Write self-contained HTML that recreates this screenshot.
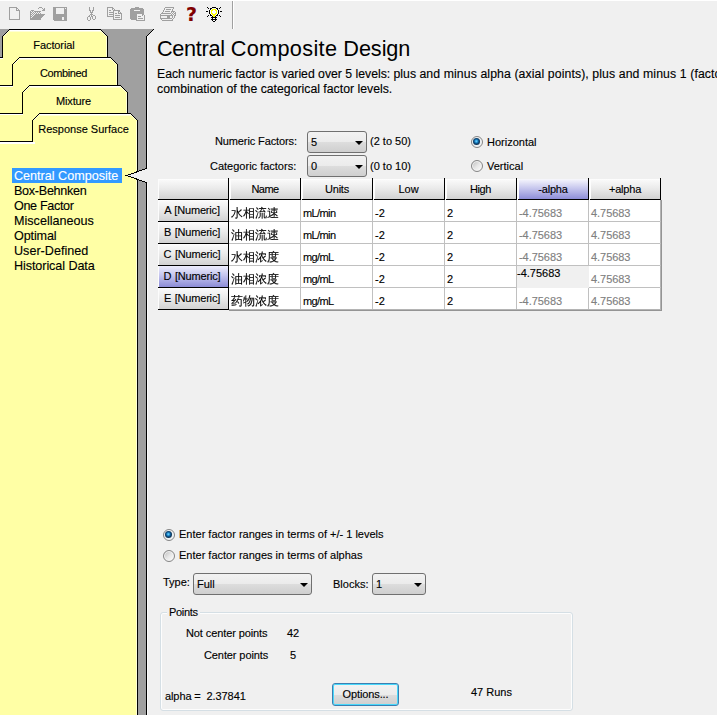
<!DOCTYPE html>
<html>
<head>
<meta charset="utf-8">
<title>Central Composite Design</title>
<style>
html,body{margin:0;padding:0;background:#f0f0f0;}
body{width:717px;height:715px;overflow:hidden;background:#f0f0f0;position:relative;
 font-family:"Liberation Sans","Noto Sans CJK SC",sans-serif;font-size:11px;color:#000;-webkit-text-stroke:0.13px;}
.abs{position:absolute;white-space:pre;line-height:1;}
#left{position:absolute;left:0;top:0;}
.tab{position:absolute;width:105px;text-align:center;font-size:11px;line-height:13px;white-space:pre;}
.li{position:absolute;left:12px;width:110px;height:15px;line-height:17px;font-size:12.6px;padding-left:2px;box-sizing:border-box;white-space:pre;}
.li.sel{background:#3399ff;color:#fff;}
.h1{position:absolute;left:157px;top:37px;font-size:21.68px;-webkit-text-stroke:0;line-height:24px;white-space:pre;}
.desc{position:absolute;left:157px;font-size:12.27px;line-height:14px;white-space:pre;}
/* table */
.k{position:absolute;background:#000;}
.gl{position:absolute;background:#c0c0c0;}
.hd{position:absolute;top:179px;height:20px;width:71px;box-sizing:border-box;text-align:center;line-height:20px;font-size:11px;
 background:linear-gradient(#ffffff 0,#f9f9f9 6%,#ebebeb 45%,#d2d2d2 100%);white-space:pre;border-left:2px solid #fdfdfd;padding-right:2px;}
.hd.sel{background:linear-gradient(#f8f8fb 0,#eeeefa 8%,#c8c8ee 45%,#8e8ed8);}
.rh{position:absolute;left:158px;width:70px;height:21px;box-sizing:border-box;text-align:center;line-height:20px;font-size:11px;letter-spacing:-0.18px;word-spacing:0.7px;border-left:1px solid #fcfcfc;padding-right:3px;
 background:linear-gradient(#ffffff 0,#f9f9f9 6%,#ebebeb 45%,#d2d2d2 100%);white-space:pre;}
.rh.sel{background:linear-gradient(#ececfb,#c4c4ee 45%,#8c8cd6);}
.cell{position:absolute;height:21px;width:71px;background:#fff;box-sizing:border-box;font-size:11px;line-height:26px;padding-left:2px;white-space:pre;}
.cell.cn{font-family:"Liberation Sans","WenQuanYi Zen Hei",sans-serif;font-size:12px;padding-left:2px;line-height:27px;}
.cell.g{color:#808080;padding-left:2px;letter-spacing:-0.05px;}
.cell.ed{background:#f0f0f0;padding-left:0;line-height:14px;height:22px;width:72px;}
.cell.un{letter-spacing:-0.6px;}
.lbl{position:absolute;font-size:11px;line-height:13px;white-space:pre;}
.sel-box{position:absolute;height:22px;box-sizing:border-box;border:1px solid #707070;border-radius:3px;
 background:linear-gradient(#f2f2f2,#ebebeb 50%,#dddddd 50%,#cfcfcf);font-size:11px;line-height:20px;padding-left:3px;white-space:pre;}
.sel-box:after{content:"";position:absolute;right:3px;top:9px;border:4px solid transparent;border-top:4px solid #000;border-bottom:0;}
.radio{position:absolute;width:12px;height:12px;border-radius:50%;box-sizing:border-box;border:1px solid #858585;
 background:linear-gradient(135deg,#c4c4c4 10%,#e6e6e6 50%,#fbfbfb 90%);box-shadow:inset 0 0 0 1px #f3f3f3;}
.radio.on{background:#e9eef2;}
.radio.on:after{content:"";position:absolute;left:1px;top:1px;width:7px;height:7px;border-radius:50%;
 background:radial-gradient(circle at 48% 46%,#7fd8fa 0,#2b9ee0 22%,#0f5890 42%,#0f3456 64%,#243e58 80%,rgba(110,125,140,.45) 100%);}
.fs{position:absolute;left:160px;top:612px;width:413px;height:99px;box-sizing:border-box;border:1px solid #d5dfe5;border-radius:3px;box-shadow:inset 0 0 0 1px rgba(255,255,255,.85);}
.btn{position:absolute;left:332px;top:683px;width:67px;height:23px;box-sizing:border-box;border:1px solid #3c7fb1;border-radius:3px;
 background:linear-gradient(#f2f2f2,#ebebeb 50%,#dddddd 50%,#cfcfcf);box-shadow:inset 0 0 0 1px #48d8fb;text-align:center;font-size:11px;line-height:21px;white-space:pre;letter-spacing:-0.1px;}
</style>
</head>
<body>
<!-- left panel shapes -->
<div style="position:absolute;left:0;top:0;width:717px;height:1px;background:#fff;"></div>
<svg id="tb" width="240" height="29" viewBox="0 0 240 29" shape-rendering="crispEdges" style="position:absolute;left:0;top:0">
<path fill="#a0a0a0" d="M9 7h8v1h-8zM9 8h1v1h-1zM16 8h2v1h-2zM9 9h1v1h-1zM16 9h1v1h-1zM18 9h1v1h-1zM9 10h1v1h-1zM16 10h4v1h-4zM9 11h1v1h-1zM19 11h1v1h-1zM9 12h1v1h-1zM19 12h1v1h-1zM9 13h1v1h-1zM19 13h1v1h-1zM9 14h1v1h-1zM19 14h1v1h-1zM9 15h1v1h-1zM19 15h1v1h-1zM9 16h1v1h-1zM19 16h1v1h-1zM9 17h1v1h-1zM19 17h1v1h-1zM9 18h1v1h-1zM19 18h1v1h-1zM9 19h11v1h-11z"/>
<path fill="#a0a0a0" d="M39 7h3v1h-3zM38 8h1v1h-1zM42 8h1v1h-1zM44 8h1v1h-1zM43 9h2v1h-2zM31 10h3v1h-3zM42 10h3v1h-3zM30 11h1v1h-1zM32 11h1v1h-1zM34 11h7v1h-7zM30 12h2v1h-2zM33 12h1v1h-1zM35 12h1v1h-1zM37 12h1v1h-1zM39 12h1v1h-1zM30 13h1v1h-1zM32 13h1v1h-1zM34 13h1v1h-1zM36 13h1v1h-1zM38 13h1v1h-1zM40 13h1v1h-1zM30 14h2v1h-2zM33 14h1v1h-1zM35 14h10v1h-10zM30 15h1v1h-1zM32 15h1v1h-1zM34 15h10v1h-10zM30 16h2v1h-2zM33 16h10v1h-10zM30 17h1v1h-1zM32 17h10v1h-10zM30 18h11v1h-11zM30 19h11v1h-11z"/>
<path fill="#a0a0a0" d="M53 7h14v1h-14zM53 8h3v1h-3zM64 8h1v1h-1zM66 8h1v1h-1zM53 9h3v1h-3zM64 9h3v1h-3zM53 10h3v1h-3zM64 10h3v1h-3zM53 11h3v1h-3zM64 11h3v1h-3zM53 12h3v1h-3zM64 12h3v1h-3zM53 13h3v1h-3zM64 13h3v1h-3zM53 14h14v1h-14zM53 15h14v1h-14zM53 16h14v1h-14zM53 17h9v1h-9zM64 17h3v1h-3zM53 18h9v1h-9zM64 18h3v1h-3zM53 19h9v1h-9zM64 19h3v1h-3zM54 20h13v1h-13z"/>
<path fill="#a0a0a0" d="M89 7h1v1h-1zM93 7h1v1h-1zM89 8h1v1h-1zM93 8h1v1h-1zM89 9h1v1h-1zM93 9h1v1h-1zM89 10h2v1h-2zM92 10h2v1h-2zM90 11h1v1h-1zM92 11h1v1h-1zM90 12h3v1h-3zM91 13h1v1h-1zM90 14h3v1h-3zM89 15h1v1h-1zM91 15h1v1h-1zM93 15h2v1h-2zM88 16h2v1h-2zM91 16h2v1h-2zM95 16h1v1h-1zM87 17h1v1h-1zM90 17h1v1h-1zM92 17h1v1h-1zM95 17h1v1h-1zM87 18h1v1h-1zM90 18h1v1h-1zM92 18h1v1h-1zM95 18h1v1h-1zM87 19h1v1h-1zM90 19h1v1h-1zM93 19h2v1h-2zM88 20h2v1h-2z"/>
<path fill="#a0a0a0" d="M107 7h6v1h-6zM107 8h1v1h-1zM112 8h2v1h-2zM107 9h1v1h-1zM112 9h1v1h-1zM114 9h1v1h-1zM107 10h1v1h-1zM109 10h2v1h-2zM113 10h7v1h-7zM107 11h1v1h-1zM113 11h1v1h-1zM118 11h2v1h-2zM107 12h1v1h-1zM109 12h5v1h-5zM118 12h1v1h-1zM120 12h1v1h-1zM107 13h1v1h-1zM113 13h1v1h-1zM115 13h2v1h-2zM118 13h4v1h-4zM107 14h1v1h-1zM109 14h5v1h-5zM121 14h1v1h-1zM107 15h1v1h-1zM113 15h1v1h-1zM115 15h5v1h-5zM121 15h1v1h-1zM107 16h7v1h-7zM121 16h1v1h-1zM113 17h1v1h-1zM115 17h5v1h-5zM121 17h1v1h-1zM113 18h1v1h-1zM121 18h1v1h-1zM113 19h9v1h-9z"/>
<path fill="#a0a0a0" d="M135 7h4v1h-4zM131 8h12v1h-12zM130 9h14v1h-14zM130 10h4v1h-4zM140 10h4v1h-4zM130 11h14v1h-14zM130 12h14v1h-14zM130 13h14v1h-14zM130 14h7v1h-7zM142 14h2v1h-2zM130 15h7v1h-7zM142 15h1v1h-1zM144 15h1v1h-1zM130 16h7v1h-7zM138 16h3v1h-3zM144 16h1v1h-1zM130 17h7v1h-7zM144 17h1v1h-1zM130 18h7v1h-7zM138 18h5v1h-5zM144 18h1v1h-1zM131 19h6v1h-6zM144 19h1v1h-1zM136 20h9v1h-9z"/>
<path fill="#a0a0a0" d="M165 7h9v1h-9zM164 8h1v1h-1zM173 8h1v1h-1zM164 9h1v1h-1zM166 9h5v1h-5zM172 9h1v1h-1zM163 10h1v1h-1zM172 10h1v1h-1zM163 11h1v1h-1zM165 11h5v1h-5zM171 11h4v1h-4zM162 12h1v1h-1zM171 12h1v1h-1zM173 12h1v1h-1zM175 12h1v1h-1zM161 13h10v1h-10zM172 13h1v1h-1zM174 13h2v1h-2zM160 14h1v1h-1zM171 14h1v1h-1zM173 14h1v1h-1zM175 14h1v1h-1zM160 15h13v1h-13zM174 15h2v1h-2zM160 16h1v1h-1zM167 16h3v1h-3zM172 16h1v1h-1zM174 16h1v1h-1zM160 17h1v1h-1zM167 17h3v1h-3zM172 17h1v1h-1zM174 17h1v1h-1zM160 18h12v1h-12zM173 18h1v1h-1zM161 19h1v1h-1zM172 19h1v1h-1zM162 20h11v1h-11z"/>
<path fill="#ffffff" d="M210 9h8v1h-8zM210 10h8v1h-8zM210 11h8v1h-8zM210 12h8v1h-8zM210 13h8v1h-8zM210 14h8v1h-8zM212 17h4v1h-4zM212 18h4v1h-4zM212 19h4v1h-4zM212 20h4v1h-4z"/>
<path fill="#ffff00" d="M212 9h4v1h-4zM211 10h2v1h-2zM215 10h2v1h-2zM211 11h1v1h-1zM216 11h1v1h-1zM211 12h1v1h-1zM216 12h1v1h-1zM211 13h2v1h-2zM215 13h2v1h-2zM212 14h4v1h-4zM213 15h2v1h-2zM213 16h2v1h-2z"/>
<path fill="#000000" d="M207 7h1v1h-1zM212 7h4v1h-4zM220 7h1v1h-1zM208 8h1v1h-1zM210 8h2v1h-2zM216 8h2v1h-2zM219 8h1v1h-1zM210 9h1v1h-1zM217 9h1v1h-1zM209 10h1v1h-1zM218 10h1v1h-1zM206 11h2v1h-2zM209 11h1v1h-1zM218 11h1v1h-1zM220 11h2v1h-2zM209 12h1v1h-1zM218 12h1v1h-1zM209 13h1v1h-1zM218 13h1v1h-1zM210 14h1v1h-1zM217 14h1v1h-1zM208 15h1v1h-1zM210 15h2v1h-2zM216 15h2v1h-2zM219 15h1v1h-1zM207 16h1v1h-1zM212 16h1v1h-1zM215 16h1v1h-1zM220 16h1v1h-1zM211 17h6v1h-6zM212 18h1v1h-1zM215 18h1v1h-1zM211 19h6v1h-6zM212 20h1v1h-1zM215 20h1v1h-1zM213 21h2v1h-2z"/>
<rect x="232" y="1" width="1" height="28" fill="#a0a0a0"/>
<rect x="233" y="1" width="1" height="28" fill="#ffffff"/>
</svg>
<div class="abs" style="left:186px;top:4px;font-family:'DejaVu Sans','Liberation Sans',sans-serif;font-size:19px;font-weight:bold;color:#800000;line-height:20px;">?</div>
<svg id="left" width="160" height="715" viewBox="0 0 160 715" shape-rendering="crispEdges">
  <polygon points="0,29 153,29 146,36 146,715 0,715" fill="#a0a0a0"/>
  <rect x="147" y="36" width="1" height="679" fill="#fbfbfb"/>
  <g fill="#ffffa5">
    <polygon points="2.5,58 2.5,36.5 9.5,29.5 100.5,29.5 107.5,36.5 107.5,58"/>
    <polygon points="0,57.5 110.5,57.5 117.5,64.5 117.5,86 0,86"/>
    <polygon points="0,85.5 120.5,85.5 127.5,92.5 127.5,114 0,114"/>
    <polygon points="0,113.5 130.5,113.5 137.5,120.5 137.5,715 0,715"/>
  </g>
  <g fill="#ffffd8">
    <rect x="136" y="121" width="1" height="594"/>
    <rect x="126" y="93" width="1" height="20"/>
    <rect x="116" y="65" width="1" height="20"/>
    <rect x="106" y="37" width="1" height="20"/>
  </g>
  <g fill="#ffffff">
    <rect x="10" y="30" width="91" height="1"/>
    <rect x="0" y="58" width="3" height="1"/>
    <rect x="20" y="58" width="91" height="1"/>
    <rect x="0" y="86" width="13" height="1"/>
    <rect x="30" y="86" width="91" height="1"/>
    <rect x="0" y="114" width="23" height="1"/>
    <rect x="40" y="114" width="91" height="1"/>
    <rect x="0" y="142" width="35" height="2"/>
  </g>
  <g fill="#ffffd4">
    <rect x="10" y="31" width="91" height="1"/>
    <rect x="20" y="59" width="91" height="1"/>
    <rect x="30" y="87" width="91" height="1"/>
    <rect x="40" y="115" width="91" height="1"/>
  </g>
  <g fill="none" stroke="#ffffe0" stroke-width="1">
    <polyline points="3.5,36.5 9.5,30.5"/>
    <polyline points="13.5,64.5 19.5,58.5"/>
    <polyline points="23.5,92.5 29.5,86.5"/>
    <polyline points="33.5,120.5 39.5,114.5"/>
    <polyline points="100.5,30.5 106.5,36.5"/>
    <polyline points="110.5,58.5 116.5,64.5"/>
    <polyline points="120.5,86.5 126.5,92.5"/>
    <polyline points="130.5,114.5 136.5,120.5"/>
  </g>
  <polygon points="148,168 125,175.5 148,183" fill="#f0f0f0"/>
  <g fill="none" stroke="#000" stroke-width="1">
    <polyline points="0,57.5 2.5,57.5 2.5,36.5 9.5,29.5 100.5,29.5 107.5,36.5 107.5,57.5"/>
    <polyline points="0,85.5 12.5,85.5 12.5,64.5 19.5,57.5 110.5,57.5 117.5,64.5 117.5,85.5"/>
    <polyline points="0,113.5 22.5,113.5 22.5,92.5 29.5,85.5 120.5,85.5 127.5,92.5 127.5,113.5"/>
    <polyline points="0,141.5 32.5,141.5 32.5,120.5 39.5,113.5 130.5,113.5 137.5,120.5 137.5,172"/>
    <polyline points="137.5,179 137.5,716"/>
    <polyline points="153.5,29.5 146.5,36.5 146.5,168.5 126.5,175.5 146.5,182.5 146.5,716"/>
  </g>
</svg>
<div class="tab" style="left:1.5px;top:39px;letter-spacing:-0.1px;">Factorial</div>
<div class="tab" style="left:11px;top:67px;letter-spacing:-0.4px;">Combined</div>
<div class="tab" style="left:21px;top:95px;letter-spacing:-0.18px;">Mixture</div>
<div class="tab" style="left:31px;top:123px;">Response Surface</div>

<div class="li sel" style="top:168px;">Central Composite</div>
<div class="li" style="top:183px;letter-spacing:-0.28px;">Box-Behnken</div>
<div class="li" style="top:198px;letter-spacing:-0.34px;">One Factor</div>
<div class="li" style="top:213px;">Miscellaneous</div>
<div class="li" style="top:228px;letter-spacing:-0.12px;">Optimal</div>
<div class="li" style="top:243px;">User-Defined</div>
<div class="li" style="top:258px;letter-spacing:-0.08px;">Historical Data</div>

<div class="h1"><span style="letter-spacing:-0.31px">Central</span> <span style="letter-spacing:0.33px">Composite</span> <span style="letter-spacing:-0.08px">Design</span></div>
<div class="desc" style="top:67px;"><span style="letter-spacing:-0.015px">Each numeric factor is varied over 5 levels: plus </span><span style="letter-spacing:0.1px">and minus alpha (axial points), plus and minus 1 (factorial</span></div>
<div class="desc" style="top:82px;">combination of the categorical factor levels.</div>

<div class="lbl" style="left:215px;top:135px;letter-spacing:-0.12px;">Numeric Factors:</div>
<div class="sel-box" style="left:307px;top:131px;width:60px;">5</div>
<div class="lbl" style="left:370px;top:135px;">(2 to 50)</div>
<div class="lbl" style="left:210px;top:160px;">Categoric factors:</div>
<div class="sel-box" style="left:307px;top:155px;width:60px;">0</div>
<div class="lbl" style="left:370px;top:160px;">(0 to 10)</div>
<div class="radio on" style="left:471px;top:136px;"></div>
<div class="lbl" style="left:487px;top:136px;">Horizontal</div>
<div class="radio" style="left:471px;top:160px;"></div>
<div class="lbl" style="left:487px;top:160px;">Vertical</div>

<div id="tbl">
<div style="position:absolute;left:229px;top:200px;width:431px;height:109px;background:#fff;"></div>
<div class="k" style="left:228px;top:178px;width:1px;height:132px;"></div>
<div class="k" style="left:300px;top:178px;width:1px;height:22px;"></div>
<div class="gl" style="left:300px;top:200px;width:1px;height:110px;background:#c0c0c0;"></div>
<div class="k" style="left:372px;top:178px;width:1px;height:22px;"></div>
<div class="gl" style="left:372px;top:200px;width:1px;height:110px;background:#c0c0c0;"></div>
<div class="k" style="left:444px;top:178px;width:1px;height:22px;"></div>
<div class="gl" style="left:444px;top:200px;width:1px;height:110px;background:#c0c0c0;"></div>
<div class="k" style="left:516px;top:178px;width:1px;height:22px;"></div>
<div class="gl" style="left:516px;top:200px;width:1px;height:110px;background:#c0c0c0;"></div>
<div class="k" style="left:588px;top:178px;width:1px;height:22px;"></div>
<div class="gl" style="left:588px;top:200px;width:1px;height:110px;background:#c0c0c0;"></div>
<div class="k" style="left:660px;top:178px;width:1px;height:22px;"></div>
<div class="gl" style="left:660px;top:200px;width:1px;height:110px;background:#b4b4b4;"></div>
<div class="gl" style="left:661px;top:200px;width:1px;height:111px;background:#949494;"></div>
<div class="k" style="left:158px;top:199px;width:503px;height:1px;"></div>
<div style="position:absolute;background:#fff;left:229px;top:199px;width:1px;height:1px;"></div>
<div style="position:absolute;background:#fff;left:301px;top:199px;width:1px;height:1px;"></div>
<div style="position:absolute;background:#fff;left:373px;top:199px;width:1px;height:1px;"></div>
<div style="position:absolute;background:#fff;left:445px;top:199px;width:1px;height:1px;"></div>
<div style="position:absolute;background:#fff;left:517px;top:199px;width:1px;height:1px;"></div>
<div style="position:absolute;background:#fff;left:589px;top:199px;width:1px;height:1px;"></div>
<div class="k" style="left:158px;top:221px;width:71px;height:1px;"></div>
<div class="gl" style="left:229px;top:221px;width:432px;height:1px;background:#c0c0c0;"></div>
<div class="k" style="left:158px;top:243px;width:71px;height:1px;"></div>
<div class="gl" style="left:229px;top:243px;width:432px;height:1px;background:#c0c0c0;"></div>
<div class="k" style="left:158px;top:265px;width:71px;height:1px;"></div>
<div class="gl" style="left:229px;top:265px;width:432px;height:1px;background:#c0c0c0;"></div>
<div class="k" style="left:158px;top:287px;width:71px;height:1px;"></div>
<div class="gl" style="left:229px;top:287px;width:432px;height:1px;background:#c0c0c0;"></div>
<div class="k" style="left:158px;top:309px;width:71px;height:1px;"></div>
<div class="gl" style="left:229px;top:309px;width:432px;height:1px;background:#b4b4b4;"></div>
<div class="gl" style="left:229px;top:310px;width:433px;height:1px;background:#949494;"></div>
<div class="rh" style="top:179px;height:20px;"></div>
<div class="hd" style="left:229px;letter-spacing:-0.55px;padding-left:1px;">Name</div>
<div class="hd" style="left:301px;letter-spacing:-0.25px;padding-left:1px;">Units</div>
<div class="hd" style="left:373px;">Low</div>
<div class="hd" style="left:445px;letter-spacing:-0.4px;">High</div>
<div class="hd sel" style="left:517px;letter-spacing:-0.2px;padding-left:1px;">-alpha</div>
<div class="hd" style="left:589px;letter-spacing:-0.2px;padding-left:1px;">+alpha</div>
<div class="rh" style="top:200px;">A [Numeric]</div>
<div class="cell cn" style="left:229px;top:200px;">水相流速</div>
<div class="cell un" style="left:301px;top:200px;">mL/min</div>
<div class="cell" style="left:373px;top:200px;">-2</div>
<div class="cell" style="left:445px;top:200px;">2</div>
<div class="cell g" style="left:517px;top:200px;">-4.75683</div>
<div class="cell g" style="left:589px;top:200px;">4.75683</div>
<div class="rh" style="top:222px;">B [Numeric]</div>
<div class="cell cn" style="left:229px;top:222px;">油相流速</div>
<div class="cell un" style="left:301px;top:222px;">mL/min</div>
<div class="cell" style="left:373px;top:222px;">-2</div>
<div class="cell" style="left:445px;top:222px;">2</div>
<div class="cell g" style="left:517px;top:222px;">-4.75683</div>
<div class="cell g" style="left:589px;top:222px;">4.75683</div>
<div class="rh" style="top:244px;">C [Numeric]</div>
<div class="cell cn" style="left:229px;top:244px;">水相浓度</div>
<div class="cell un" style="left:301px;top:244px;">mg/mL</div>
<div class="cell" style="left:373px;top:244px;">-2</div>
<div class="cell" style="left:445px;top:244px;">2</div>
<div class="cell g" style="left:517px;top:244px;">-4.75683</div>
<div class="cell g" style="left:589px;top:244px;">4.75683</div>
<div class="rh sel" style="top:266px;">D [Numeric]</div>
<div class="cell cn" style="left:229px;top:266px;">油相浓度</div>
<div class="cell un" style="left:301px;top:266px;">mg/mL</div>
<div class="cell" style="left:373px;top:266px;">-2</div>
<div class="cell" style="left:445px;top:266px;">2</div>
<div class="cell ed" style="left:517px;top:266px;">-4.75683</div>
<div class="cell g" style="left:589px;top:266px;">4.75683</div>
<div class="rh" style="top:288px;">E [Numeric]</div>
<div class="cell cn" style="left:229px;top:288px;">药物浓度</div>
<div class="cell un" style="left:301px;top:288px;">mg/mL</div>
<div class="cell" style="left:373px;top:288px;">-2</div>
<div class="cell" style="left:445px;top:288px;">2</div>
<div class="cell g" style="left:517px;top:288px;">-4.75683</div>
<div class="cell g" style="left:589px;top:288px;">4.75683</div>
</div>

<div class="radio on" style="left:163px;top:529px;"></div>
<div class="lbl" style="left:179px;top:528px;">Enter factor ranges in terms of +/- 1 levels</div>
<div class="radio" style="left:163px;top:550px;"></div>
<div class="lbl" style="left:179px;top:549px;">Enter factor ranges in terms of alphas</div>

<div class="lbl" style="left:163px;top:576px;">Type:</div>
<div class="sel-box" style="left:193px;top:573px;width:119px;">Full</div>
<div class="lbl" style="left:333px;top:578px;">Blocks:</div>
<div class="sel-box" style="left:372px;top:573px;width:54px;">1</div>

<div class="fs"></div>
<div class="lbl" style="left:167px;top:606px;background:#f0f0f0;padding:0 2px 0 2px;letter-spacing:-0.3px;">Points</div>
<div class="lbl" style="left:186px;top:627px;letter-spacing:-0.1px;">Not center points</div>
<div class="lbl" style="left:287px;top:627px;">42</div>
<div class="lbl" style="left:204px;top:649px;letter-spacing:-0.1px;">Center points</div>
<div class="lbl" style="left:290px;top:649px;">5</div>
<div class="lbl" style="left:165px;top:690px;letter-spacing:-0.1px;">alpha =  2.37841</div>
<div class="btn">Options...</div>
<div class="lbl" style="left:471px;top:686px;">47 Runs</div>
</body>
</html>
